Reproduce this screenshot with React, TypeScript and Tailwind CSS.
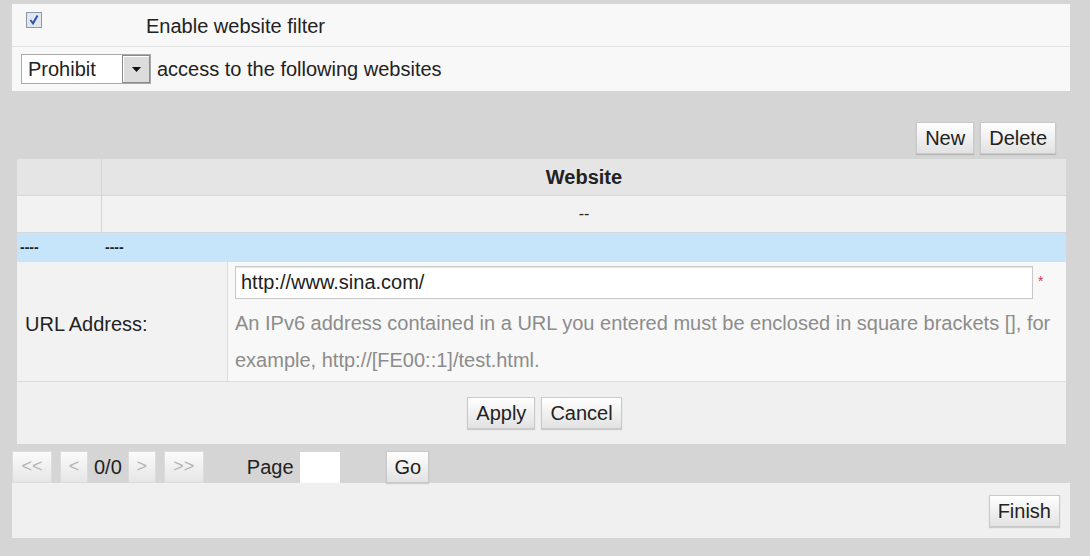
const btn =
  'h-[32px] px-[8px] border border-[#c9c9c9] bg-gradient-to-b from-[#ffffff] to-[#e2e2e2] text-[20px] leading-[30px] text-[#222] shadow-[0_1px_1px_rgba(0,0,0,0.15)]'

const pagerBtn =
  'h-[32px] border border-[#dcdcdc] bg-gradient-to-b from-[#fbfbfb] to-[#e6e6e6] text-[18px] text-[#b4b4b4] flex items-center justify-center'

const CheckBox = () => {
  return (
    <svg width="16" height="16" viewBox="0 0 16 16">
      <rect x="0.5" y="0.5" width="15" height="15" fill="#e2e7ee" stroke="#8e99a6" />
      <path d="M4.5 8 L7 11.5 L11.5 3.5" fill="none" stroke="#2a55b8" strokeWidth="2" />
    </svg>
  )
}

export default function App() {
  return (
    <div className="w-[1090px] h-[556px] overflow-hidden bg-[#d5d5d5] pl-[12px] pr-[20px] pt-[4px] font-['Liberation_Sans',Arial,sans-serif] text-[#222] text-[20px]">
      {/* filter switch + mode */}
      <div className="bg-[#f8f8f8]">
        <div className="h-[43px] flex items-center border-b border-[#e2e2e2]">
          <div className="ml-[14px] mt-[-10px]">
            <CheckBox />
          </div>
          <span className="ml-[104px] mt-[2px]">Enable website filter</span>
        </div>
        <div className="h-[44px] flex items-center">
          <div className="ml-[9px] flex h-[30px] w-[130px] border border-[#a9a9a9] bg-white">
            <span className="flex-1 pl-[6px] leading-[28px]">Prohibit</span>
            <span className="w-[28px] h-[28px] border border-[#8a8a8a] bg-[#dcdcdc] flex items-center justify-center shadow-[inset_1px_1px_0_#fff]">
              <svg width="9" height="5" viewBox="0 0 9 5">
                <path d="M0 0 H9 L4.5 5 Z" fill="#111" />
              </svg>
            </span>
          </div>
          <span className="ml-[6px]">access to the following websites</span>
        </div>
      </div>

      {/* list actions */}
      <div className="mt-[31px] flex justify-end gap-[6px] pr-[14px]">
        <button className={btn}>New</button>
        <button className={btn}>Delete</button>
      </div>

      {/* table */}
      <div className="mt-[5px] ml-[5px] mr-[4px]">
        <div className="flex h-[37px] bg-[#e5e5e5] border-b border-[#d8d8d8]">
          <div className="w-[85px] border-r border-[#d4d4d4]" />
          <div className="flex-1 flex items-center justify-center font-bold">Website</div>
        </div>
        <div className="flex h-[37px] bg-[#f2f2f2] border-b border-[#d8d8d8]">
          <div className="w-[85px] border-r border-[#d4d4d4]" />
          <div className="flex-1 flex items-center justify-center text-[16px]">--</div>
        </div>
        <div className="flex h-[29px] items-center bg-[#c6e4fa] text-[14px] font-bold">
          <div className="w-[85px] pl-[3px]">----</div>
          <div className="pl-[3px]">----</div>
        </div>
        <div className="flex h-[120px] bg-[#f2f2f2] border-b border-[#dcdcdc]">
          <div className="w-[211px] border-r border-[#dcdcdc] flex items-center pl-[8px] pt-[4px]">
            URL Address:
          </div>
          <div className="flex-1 bg-[#f8f8f8] pl-[7px] pt-[4px]">
            <div className="flex items-center">
              <div className="w-[798px] h-[33px] border border-[#c8c8c8] bg-white pl-[5px] leading-[31px] shadow-[inset_0_1px_1px_rgba(0,0,0,0.1)]">
                http://www.sina.com/
              </div>
              <span className="ml-[5px] mt-[-2px] text-[14px] text-[#d0364a]">*</span>
            </div>
            <p className="mt-[6px] leading-[37px] text-[#8c8c8c] pr-[10px]">
              An IPv6 address contained in a URL you entered must be enclosed in square brackets [], for
              example, http://[FE00::1]/test.html.
            </p>
          </div>
        </div>
        <div className="h-[62px] bg-[#f0f0f0] flex items-center justify-center gap-[6px] pl-[6px]">
          <button className={btn}>Apply</button>
          <button className={btn}>Cancel</button>
        </div>
      </div>

      {/* pager */}
      <div className="mt-[6px] h-[33px] flex items-center">
        <span className={pagerBtn + ' w-[40px]'}>&lt;&lt;</span>
        <span className={pagerBtn + ' w-[28px] ml-[8px]'}>&lt;</span>
        <span className="ml-[6px]">0/0</span>
        <span className={pagerBtn + ' w-[28px] ml-[6px]'}>&gt;</span>
        <span className={pagerBtn + ' w-[40px] ml-[8px]'}>&gt;&gt;</span>
        <span className="ml-[43px]">Page</span>
        <span className="ml-[6px] w-[40px] h-[32px] bg-white border-t border-[#d8d8d8]" />
        <button className={btn + ' ml-[46px] w-[43px] px-0'}>Go</button>
      </div>

      {/* finish */}
      <div className="h-[55px] bg-[#f0f0f0] flex items-center justify-end pr-[10px]">
        <button className={btn}>Finish</button>
      </div>
    </div>
  )
}
